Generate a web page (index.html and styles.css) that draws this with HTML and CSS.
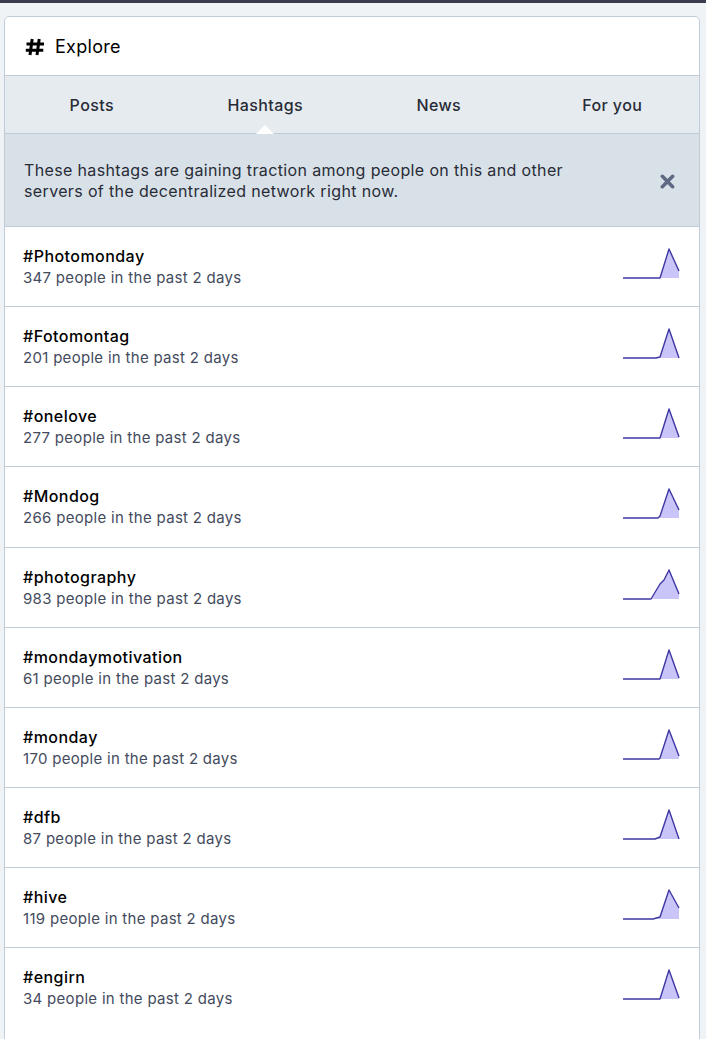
FILE: index.html
```html
<!DOCTYPE html>
<html lang="en">
<head>
<meta charset="utf-8">
<title>Explore</title>
<link rel="stylesheet" href="styles.css">
</head>
<body>
<div class="topbar"></div>
<main class="page">
  <section class="card">
    <header class="card-header">
      <svg class="hash-icon" viewBox="0 0 20 18" width="20" height="18" aria-hidden="true">
        <path d="M7.2 1 L5 17 M14.2 1 L12 17 M1.5 6 L19 6 M0.8 12.2 L18.3 12.2" stroke="#000" stroke-width="3" fill="none"/>
      </svg>
      <h1 class="title">Explore</h1>
    </header>
    <nav class="tabs">
      <a class="tab">Posts</a>
      <a class="tab active">Hashtags</a>
      <a class="tab">News</a>
      <a class="tab">For you</a>
    </nav>
    <div class="banner">
      <p class="banner-text">These hashtags are gaining traction among people on this and other servers of the decentralized network right now.</p>
      <button class="close" aria-label="Dismiss">
        <svg viewBox="0 0 16 16" width="15" height="15" aria-hidden="true">
          <path d="M2.5 2.5 L13.5 13.5 M13.5 2.5 L2.5 13.5" stroke="#606984" stroke-width="3.8" stroke-linecap="round" fill="none"/>
        </svg>
      </button>
    </div>
    <div class="list">
      <div class="row">
        <div class="info"><div class="name">#Photomonday</div><div class="meta">347 people in the past 2 days</div></div>
        <svg class="spark" viewBox="0 0 56 34" width="56" height="34"><polygon class="fill" points="37,30 46,1 56,23 56,30"/><polyline class="line" points="0,30 37,30 46,1 56,23"/></svg>
      </div>
      <div class="row">
        <div class="info"><div class="name">#Fotomontag</div><div class="meta">201 people in the past 2 days</div></div>
        <svg class="spark" viewBox="0 0 56 34" width="56" height="34"><polygon class="fill" points="33,30 37,29 46,1 56,30"/><polyline class="line" points="0,30 33,30 37,29 46,1 56,30"/></svg>
      </div>
      <div class="row">
        <div class="info"><div class="name">#onelove</div><div class="meta">277 people in the past 2 days</div></div>
        <svg class="spark" viewBox="0 0 56 34" width="56" height="34"><polygon class="fill" points="37,30 46,1 56,29 56,30"/><polyline class="line" points="0,30 37,30 46,1 56,29"/></svg>
      </div>
      <div class="row">
        <div class="info"><div class="name">#Mondog</div><div class="meta">266 people in the past 2 days</div></div>
        <svg class="spark" viewBox="0 0 56 34" width="56" height="34"><polygon class="fill" points="35,30 37,28 46,1 56,22 56,30"/><polyline class="line" points="0,30 35,30 37,28 46,1 56,22"/></svg>
      </div>
      <div class="row">
        <div class="info"><div class="name">#photography</div><div class="meta">983 people in the past 2 days</div></div>
        <svg class="spark" viewBox="0 0 56 34" width="56" height="34"><polygon class="fill" points="28,30 37,15 41,11 46,1 56,25 56,30"/><polyline class="line" points="0,30 28,30 37,15 41,11 46,1 56,25"/></svg>
      </div>
      <div class="row">
        <div class="info"><div class="name">#mondaymotivation</div><div class="meta">61 people in the past 2 days</div></div>
        <svg class="spark" viewBox="0 0 56 34" width="56" height="34"><polygon class="fill" points="37,30 46,1 56,29 56,30"/><polyline class="line" points="0,30 37,30 46,1 56,29"/></svg>
      </div>
      <div class="row">
        <div class="info"><div class="name">#monday</div><div class="meta">170 people in the past 2 days</div></div>
        <svg class="spark" viewBox="0 0 56 34" width="56" height="34"><polygon class="fill" points="36,30 37,29 46,1 56,27 56,30"/><polyline class="line" points="0,30 36,30 37,29 46,1 56,27"/></svg>
      </div>
      <div class="row">
        <div class="info"><div class="name">#dfb</div><div class="meta">87 people in the past 2 days</div></div>
        <svg class="spark" viewBox="0 0 56 34" width="56" height="34"><polygon class="fill" points="32,30 37,28 46,1 56,30"/><polyline class="line" points="0,30 32,30 37,28 46,1 56,30"/></svg>
      </div>
      <div class="row">
        <div class="info"><div class="name">#hive</div><div class="meta">119 people in the past 2 days</div></div>
        <svg class="spark" viewBox="0 0 56 34" width="56" height="34"><polygon class="fill" points="30,30 37,28 46,1 56,19 56,30"/><polyline class="line" points="0,30 30,30 37,28 46,1 56,19"/></svg>
      </div>
      <div class="row">
        <div class="info"><div class="name">#engirn</div><div class="meta">34 people in the past 2 days</div></div>
        <svg class="spark" viewBox="0 0 56 34" width="56" height="34"><polygon class="fill" points="37,30 46,1 56,29 56,30"/><polyline class="line" points="0,30 37,30 46,1 56,29"/></svg>
      </div>
    </div>
  </section>
</main>
</body>
</html>
```

FILE: styles.css
```css
html, body {
  margin: 0;
  padding: 0;
  overflow: hidden;
  background: #eff3f5;
  font-family: Inter, "Noto Sans", "Liberation Sans", sans-serif;
  color: #000;
}

.topbar {
  height: 3px;
  background: #3a3d4d;
}

.page {
  padding: 13px 6px 0 4px;
}

.card {
  background: #fff;
  border: 1px solid #c0cdd9;
  border-radius: 5px 5px 0 0;
  overflow: hidden;
}

.card-header {
  display: flex;
  align-items: center;
  gap: 10px;
  height: 58px;
  padding: 0 20px;
  border-bottom: 1px solid #c0cdd9;
}

.hash-icon {
  display: block;
  margin-top: 1px;
}

.title {
  margin: 0;
  font-size: 18px;
  font-weight: 400;
  letter-spacing: 0.3px;
}

.tabs {
  display: grid;
  grid-template-columns: repeat(4, 1fr);
  height: 57px;
  background: #e6ebf0;
  border-bottom: 1px solid #c0cdd9;
}

.tab {
  display: flex;
  align-items: center;
  justify-content: center;
  position: relative;
  font-size: 16px;
  font-weight: 500;
  letter-spacing: 0.4px;
  color: #282c37;
}

.tab.active::after {
  content: "";
  position: absolute;
  left: 50%;
  bottom: -1px;
  margin-left: -9px;
  border-style: solid;
  border-width: 0 9px 9px 9px;
  border-color: transparent transparent #fff transparent;
}

.banner {
  display: flex;
  align-items: center;
  justify-content: space-between;
  background: #d9e1e8;
  border-bottom: 1px solid #c0cdd9;
  padding: 2px 24px 0 19px;
  height: 92px;
  box-sizing: border-box;
  height: 93px;
}

.banner-text {
  margin: 0;
  max-width: 580px;
  font-size: 16px;
  line-height: 21px;
  letter-spacing: 0.36px;
  color: #282c37;
}

.close {
  background: none;
  border: 0;
  padding: 0;
  margin-top: 0;
  display: flex;
}

.list {
  padding-bottom: 40px;
}

.row {
  display: flex;
  align-items: center;
  justify-content: space-between;
  height: 79.125px;
  padding: 0 20px 0 18px;
  border-bottom: 1px solid #c0cdd9;
}

.row:last-child {
  border-bottom: 0;
}

.info {
  margin-top: 1px;
}

.name {
  font-size: 16px;
  font-weight: 500;
  line-height: 21px;
  letter-spacing: 0.45px;
  color: #000;
}

.meta {
  font-size: 15px;
  line-height: 21px;
  letter-spacing: 0.3px;
  color: #444b5d;
}

.spark {
  display: block;
  overflow: visible;
  margin-bottom: 3px;
}

.spark .fill {
  fill: #c9c5f8;
  stroke: none;
}

.spark .line {
  fill: none;
  stroke: #3f37a3;
  stroke-width: 1.4;
  stroke-linejoin: round;
}
```
